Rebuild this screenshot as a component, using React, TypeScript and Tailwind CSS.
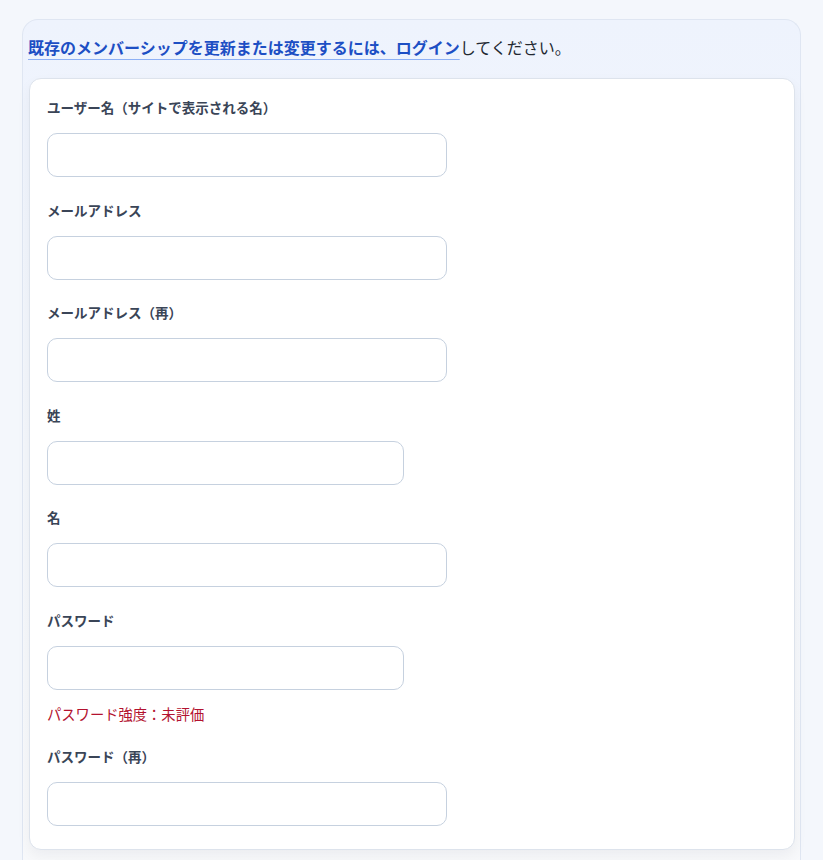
const fields: { label: string; width: string; type: string; hint?: string }[] = [
  { label: "ユーザー名（サイトで表示される名）", width: "w-[400px]", type: "text" },
  { label: "メールアドレス", width: "w-[400px]", type: "email" },
  { label: "メールアドレス（再）", width: "w-[400px]", type: "email" },
  { label: "姓", width: "w-[357px]", type: "text" },
  { label: "名", width: "w-[400px]", type: "text" },
  { label: "パスワード", width: "w-[357px]", type: "password", hint: "パスワード強度：未評価" },
  { label: "パスワード（再）", width: "w-[400px]", type: "password" },
];

function Field({ label, width, type, hint }: (typeof fields)[number]) {
  return (
    <div>
      <label className="block text-[13.5px] font-bold leading-[19.5px] text-[#3a4557]">
        {label}
      </label>
      <input
        type={type}
        className={`mt-[15.5px] block h-[44px] ${width} rounded-[10px] border border-[#c6d1df] bg-white px-3 text-sm outline-none`}
      />
      {hint && (
        <p className="mt-[14px] text-[14.3px] leading-[20px] text-[#b3122f]">{hint}</p>
      )}
    </div>
  );
}

export default function App() {
  return (
    <div
      className="min-h-[860px] bg-[#f4f7fc] px-[22px] pt-[19px] text-[#1f2937]"
      style={{ fontFamily: "'Noto Sans CJK JP', 'Noto Sans', sans-serif" }}
    >
      <div className="h-[860px] rounded-t-[16px] border border-b-0 border-[#dfe6f2] bg-gradient-to-b from-[#eef3fd] via-[#f4f7fc] to-[#f8f9fb] pl-[5px] pr-[5px]">
        {/* Header */}
        <p className="pt-[15px] pb-[19px] text-[16px] leading-[24px] text-[#222831]">
          <a
            href="#"
            className="font-bold text-[#1d4fc4] underline decoration-[#8db0f5] decoration-1 underline-offset-[5px]"
          >
            既存のメンバーシップを更新または変更するには、ログイン
          </a>
          してください。
        </p>

        {/* Form card */}
        <div className="ml-px rounded-[12px] border border-[#dde3ec] bg-white px-[17px] pt-[19px] pb-[23px] shadow-[0_6px_14px_rgba(15,23,42,0.05)]">
          <div className="flex flex-col gap-[23.5px]">
            {fields.map((f) => (
              <Field key={f.label} {...f} />
            ))}
          </div>
        </div>
      </div>
    </div>
  );
}
